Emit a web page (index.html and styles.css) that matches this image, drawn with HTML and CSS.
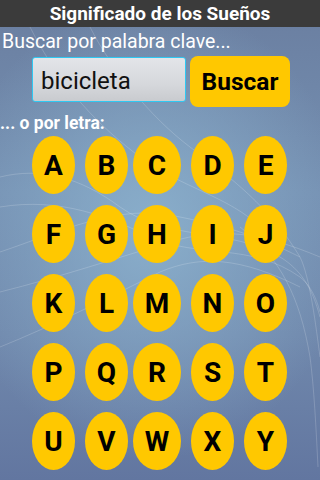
FILE: index.html
```html
<!DOCTYPE html>
<html lang="es">
<head>
<meta charset="utf-8">
<title>Significado de los Sueños</title>
<link rel="stylesheet" href="styles.css">
</head>
<body>
<div class="screen">
  <svg class="swirl" width="320" height="453" viewBox="0 0 320 453" aria-hidden="true">
    <g fill="none" stroke="#ffffff" stroke-opacity="0.22" stroke-width="0.8">
      <path d="M0 150 C40 140 80 150 120 180 C170 215 230 200 280 230 C300 242 312 260 320 290"/>
      <path d="M0 180 C60 170 110 190 150 210 C200 232 250 215 300 250 C310 258 316 270 320 285"/>
      <path d="M0 225 C60 205 120 175 180 190 C230 200 260 210 300 230"/>
      <path d="M0 265 C60 250 120 230 170 215 C220 200 260 205 320 230"/>
      <path d="M0 320 C50 300 110 270 160 245 C200 228 240 230 300 260"/>
      <path d="M30 0 C60 60 100 100 140 130 C180 160 230 170 260 200"/>
      <path d="M90 0 C110 40 150 90 190 120 C230 150 270 180 300 230 C310 250 316 300 320 330"/>
      <path d="M240 200 C280 230 300 270 310 330 C314 360 316 400 318 440"/>
    </g>
  </svg>
  <header class="titlebar">Significado de los Sueños</header>
  <div class="content">
    <div class="label">Buscar por palabra clave...</div>
    <div class="search-row">
      <div class="input">bicicleta</div>
      <div class="btn">Buscar</div>
    </div>
    <div class="label-bold">... o por letra:</div>
    <div class="letters">
      <div class="key">A</div><div class="key">B</div><div class="key wide">C</div><div class="key">D</div><div class="key">E</div>
      <div class="key">F</div><div class="key">G</div><div class="key wide">H</div><div class="key">I</div><div class="key">J</div>
      <div class="key">K</div><div class="key">L</div><div class="key wide">M</div><div class="key">N</div><div class="key">O</div>
      <div class="key">P</div><div class="key">Q</div><div class="key wide">R</div><div class="key">S</div><div class="key">T</div>
      <div class="key">U</div><div class="key">V</div><div class="key wide">W</div><div class="key">X</div><div class="key">Y</div>
    </div>
  </div>
</div>
</body>
</html>
```

FILE: styles.css
```css
* { box-sizing: border-box; }
html, body { margin: 0; padding: 0; }
body {
  width: 320px;
  height: 480px;
  overflow: hidden;
  font-family: Roboto, "Liberation Sans", sans-serif;
}
.screen {
  position: relative;
  width: 320px;
  height: 480px;
  background:
    radial-gradient(ellipse 200px 230px at 150px 230px, rgba(140,178,206,0.9) 0%, rgba(140,178,206,0) 100%),
    linear-gradient(180deg, #6a7ea0 0%, #7590b2 40%, #7088ac 70%, #6276a0 100%);
}
.swirl {
  position: absolute;
  left: 0;
  top: 27px;
}
.titlebar {
  position: relative;
  height: 27px;
  background: #3b3b3b;
  color: #ffffff;
  font-weight: 700;
  font-size: 19px;
  line-height: 28px;
  text-align: center;
}
.content {
  position: relative;
}
.label {
  color: #ffffff;
  font-size: 19.5px;
  line-height: 24px;
  padding: 3px 0 0 2px;
  height: 29px;
}
.search-row {
  display: flex;
  align-items: flex-start;
  gap: 4px;
  padding-left: 32px;
}
.input {
  width: 154px;
  height: 45px;
  margin-top: 1px;
  border: 1.5px solid #2ec8f2;
  border-radius: 3px;
  background: linear-gradient(180deg, #e3e5e9 0%, #d6d8dc 60%, #c9cbcf 100%);
  color: #111111;
  font-size: 24px;
  line-height: 46px;
  padding-left: 8px;
}
.btn {
  width: 100px;
  height: 51px;
  border-radius: 8px;
  background: #ffc800;
  color: #000000;
  font-weight: 700;
  font-size: 24.5px;
  line-height: 51px;
  text-align: center;
}
.label-bold {
  color: #ffffff;
  font-weight: 700;
  font-size: 17.5px;
  line-height: 20px;
  height: 29px;
  padding-top: 6px;
}
.letters {
  display: grid;
  grid-template-columns: 53px 48px 58px 53px 43px;
  grid-auto-rows: 58px;
  row-gap: 11px;
  justify-items: start;
  padding-left: 32px;
}
.key {
  width: 43px;
  height: 58px;
  border-radius: 50%;
  background: #ffc800;
  color: #000000;
  font-weight: 700;
  font-size: 28px;
  display: flex;
  align-items: center;
  justify-content: center;
}
.key.wide { width: 48px; }
```
